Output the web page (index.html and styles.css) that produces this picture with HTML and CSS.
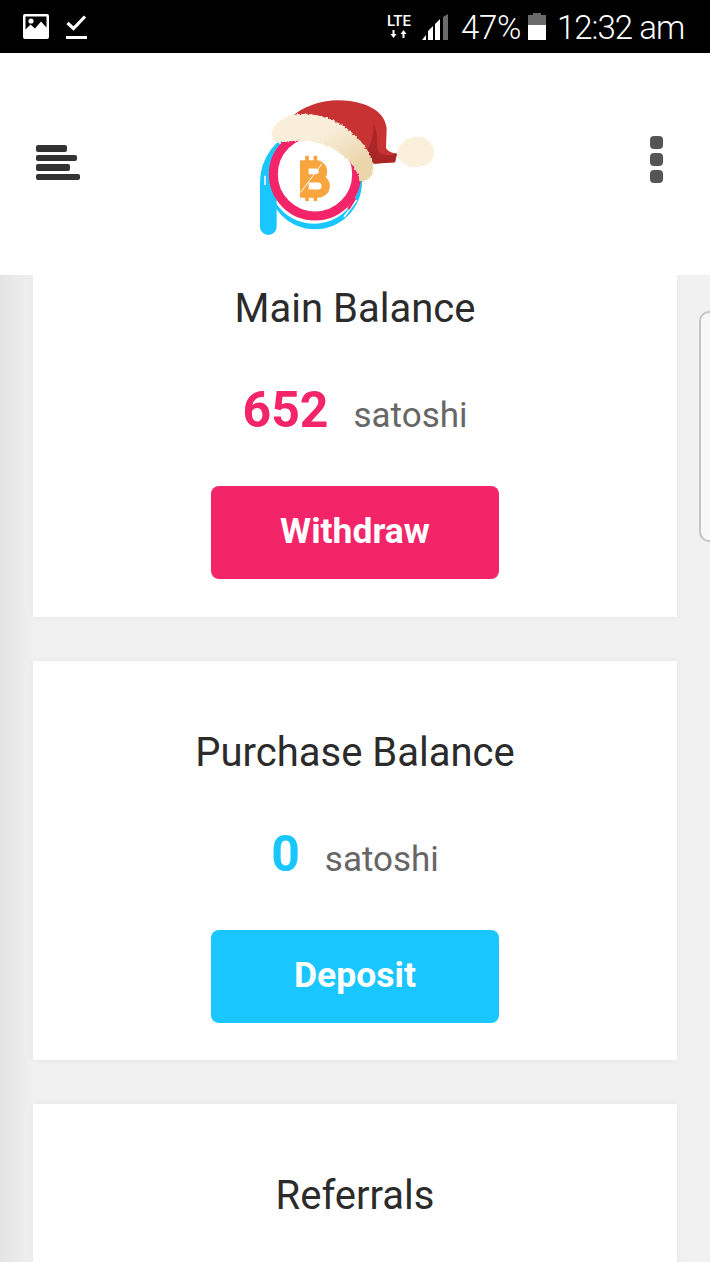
FILE: index.html
```html
<!DOCTYPE html>
<html lang="en">
<head>
<meta charset="utf-8">
<title>Balance</title>
<link rel="stylesheet" href="styles.css">
</head>
<body>
<div class="status">
  <svg class="st-image" viewBox="0 0 26 25"><path fill="#fff" fill-rule="evenodd" d="M2 0h22a2 2 0 0 1 2 2v21a2 2 0 0 1-2 2H2a2 2 0 0 1-2-2V2a2 2 0 0 1 2-2zM2.500 2.500v13l5-5 4.500 4 6-7 5.500 6v-11z"/><circle cx="8" cy="7" r="2.600" fill="#fff"/></svg>
  <svg class="st-check" viewBox="0 0 21 24"><path fill="none" stroke="#fff" stroke-width="3.200" d="M1.500 8l6 5.500L19 1.500"/><rect y="21" width="21" height="3" fill="#fff"/></svg>
  <div class="st-lte"><span class="st-lte-text">LTE</span><svg class="st-arrows" viewBox="0 0 18 8"><path fill="#fff" d="M2.500 0h2v4h2L3.500 8 .5 4h2zM12.500 8h2V4h2l-3-4-3 4h2z"/></svg></div>
  <svg class="st-signal" viewBox="0 0 26 26"><path fill="#fff" d="M0 26l4-5v5zM6 26v-9l5-5v14zM13 26V10l5-5v21z"/><path fill="#6a6a6a" d="M21 26V3l5-3v26z"/></svg>
  <span class="st-text st-pct">47%</span>
  <svg class="st-battery" viewBox="0 0 18 27"><path fill="#6a6a6a" d="M5 0h8v2h5v10H0V2h5z"/><rect y="12" width="18" height="15" fill="#fff"/></svg>
  <span class="st-text st-time">12:32 am</span>
</div>
<header class="topbar">
  <div class="burger"><i class="b1"></i><i class="b2"></i><i class="b3"></i><i class="b4"></i></div>
  <svg class="logo" viewBox="0 0 630 480">
    <defs>
      <linearGradient id="fur" x1="0" y1="0" x2="1" y2="1"><stop offset="0.400" stop-color="#f8eeda"/><stop offset="0.800" stop-color="#ebd6ab"/></linearGradient>
      <filter id="fuzz" x="-10%" y="-10%" width="120%" height="120%"><feTurbulence type="fractalNoise" baseFrequency="0.14" numOctaves="2" seed="4"/><feDisplacementMap in="SourceGraphic" scale="12" xChannelSelector="R" yChannelSelector="G"/></filter>
    </defs>
    <circle cx="225" cy="292" r="141" fill="#1ac6ff"/>
    <circle cx="222" cy="280" r="136" fill="#fff"/>
    <path d="M85 425V290A140 140 0 0 1 180 160" fill="none" stroke="#1ac6ff" stroke-width="50" stroke-linecap="round"/>
    <path d="M75 272V300" stroke="#e8f9ff" stroke-width="5"/>
    <circle cx="225" cy="268" r="125" fill="#fff" stroke="#f42468" stroke-width="27"/>
    <path d="M350 345L312 396" stroke="#fff" stroke-width="5"/>
    <path d="M345 340L325 372" stroke="#f42468" stroke-width="8"/>
    <g fill="none" stroke="#f8a43f">
      <path stroke-width="25" d="M192 238h36a19 19 0 0 1 0 42h-36M192 280h42a22 22 0 0 1 0 46h-42"/>
      <path stroke-width="26" d="M193 226v112"/>
      <path stroke-width="11" d="M201 212v20M226 212v20M201 334v14M226 334v14"/>
    </g>
    <path d="M182 322L246 236" stroke="#fff" stroke-width="3"/>
    <path fill="#c93232" d="M150 100C190 60 260 38 330 48C395 58 435 85 440 130L438 190C450 205 465 205 472 205L465 232L400 236L340 200L230 110z"/>
    <path fill="#a92626" d="M400 115C418 150 408 190 415 200C425 210 450 215 470 205L465 232L400 236L378 205C395 175 402 150 400 115z"/>
    <g filter="url(#fuzz)">
      <path fill="url(#fur)" d="M95 150C100 116 125 96 160 90C215 80 285 98 330 138C375 176 400 215 400 250C398 272 384 287 362 290C350 250 320 210 270 186C220 166 170 162 115 174C105 172 95 160 95 150z"/>
      <path fill="#fbf0dc" d="M472 205C472 175 505 152 540 155C570 162 585 185 582 210C575 240 545 252 515 245C490 240 472 225 472 205z"/>
    </g>
  </svg>
  <div class="kebab"><i></i><i></i><i></i></div>
</header>
<main class="content">
  <div class="edge-panel"></div>
  <section class="card card-clipped">
    <h2 class="card-title">Main Balance</h2>
    <p class="amount"><b class="num pink">652</b><span class="unit">satoshi</span></p>
    <a class="btn btn-pink">Withdraw</a>
  </section>
  <section class="card">
    <h2 class="card-title">Purchase Balance</h2>
    <p class="amount"><b class="num blue">0</b><span class="unit">satoshi</span></p>
    <a class="btn btn-blue">Deposit</a>
  </section>
  <section class="card">
    <h2 class="card-title">Referrals</h2>
  </section>
</main>
</body>
</html>
```
FILE: styles.css
```css
* { box-sizing: border-box; }
html, body { margin: 0; padding: 0; }
body {
  width: 710px;
  height: 1262px;
  overflow: hidden;
  background: #f1f1f1;
  font-family: Roboto, "Liberation Sans", sans-serif;
}
.status {
  height: 53px;
  background: #000;
  display: flex;
  align-items: center;
  padding-left: 23px;
  color: #fff;
}
.status svg { display: block; flex: none; }
.st-image { width: 26px; height: 25px; margin-top: -1px; }
.st-check { width: 21px; height: 24px; margin-left: 17px; margin-top: 1px; }
.st-lte {
  margin-left: 297px;
  width: 30px;
  display: flex;
  flex-direction: column;
  align-items: center;
  gap: 3px;
  margin-top: -1px;
}
.st-lte-text { font-size: 15px; line-height: 12px; font-weight: 500; }
.st-arrows { width: 18px; height: 8px; }
.st-signal { width: 26px; height: 26px; margin-left: 8px; }
.st-text { font-weight: 300; font-size: 33px; line-height: 40px; white-space: nowrap; margin-top: 3px; }
.st-pct { margin-left: 13px; width: 58px; letter-spacing: -0.3px; }
.st-battery { width: 18px; height: 27px; margin-left: 9px; }
.st-time { margin-left: 11px; letter-spacing: -1px; }
.topbar {
  height: 222px;
  background: #fff;
  display: flex;
  align-items: flex-start;
  padding-left: 36px;
  position: relative;
  z-index: 2;
}
.burger {
  width: 44px;
  margin-top: 92px;
  display: flex;
  flex-direction: column;
  gap: 3px;
}
.burger i { display: block; height: 6.500px; background: #333; border-radius: 2px; }
.b1 { width: 31px; }
.b2 { width: 41px; }
.b3 { width: 34px; }
.b4 { width: 44px; }
.logo { width: 210px; height: 160px; margin-left: 160px; margin-top: 32px; flex: none; filter: blur(0.5px); }
.kebab {
  margin-left: 200px;
  margin-top: 83px;
  width: 13px;
  display: flex;
  flex-direction: column;
  gap: 4px;
}
.kebab i { display: block; height: 13px; background: #555; border-radius: 4px; }
.content {
  height: 987px;
  padding: 0 33px;
  display: flex;
  flex-direction: column;
  gap: 44px;
  position: relative;
  overflow: hidden;
  background: linear-gradient(to right, #e4e4e4 0, #e8e8e8 12px, #efefef 30px, #f1f1f1 33px);
}
.edge-panel {
  position: absolute;
  left: 699px;
  top: 36px;
  width: 30px;
  height: 231px;
  background: #f7f7f7;
  border: 2px solid #c4c4c4;
  border-radius: 10px;
}
.card {
  background: #fff;
  flex: none;
  height: 399px;
  padding-top: 72px;
  text-align: center;
  box-shadow: 0 0 6px rgba(0, 0, 0, 0.06);
}
.card-clipped { height: 342px; padding-top: 14px; }
.card-title {
  margin: 0;
  font-size: 40px;
  line-height: 40px;
  font-weight: 400;
  color: #2b2b2b;
}
.amount {
  margin: 48px 0 0;
  height: 66px;
  display: flex;
  justify-content: center;
  align-items: baseline;
  gap: 25px;
  line-height: 66px;
}
.num { font-size: 50px; font-weight: 700; }
.pink { color: #f42468; }
.blue { color: #1ac6ff; }
.unit { font-size: 35px; color: #666; }
.btn {
  display: block;
  width: 288px;
  height: 93px;
  margin: 43px auto 0;
  border-radius: 8px;
  color: #fff;
  font-size: 35.500px;
  font-weight: 700;
  line-height: 91px;
}
.btn-pink { background: #f42468; }
.btn-blue { background: #1ac6ff; }
```
